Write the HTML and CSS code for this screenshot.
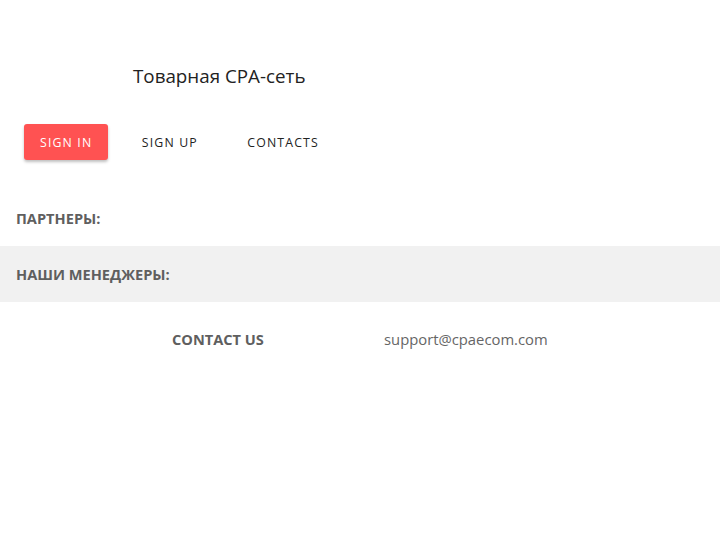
FILE: index.html
```html
<!DOCTYPE html>
<html lang="ru">
<head>
<meta charset="utf-8">
<title>Товарная CPA-сеть</title>
<link rel="stylesheet" href="styles.css">
</head>
<body>
<header class="header">
  <div class="brand">Товарная CPA-сеть</div>
  <nav class="nav">
    <a class="btn btn-primary" href="#">Sign in</a>
    <a class="btn" href="#">Sign up</a>
    <a class="btn" href="#">Contacts</a>
  </nav>
</header>
<section class="row">
  <h2 class="row-title">ПАРТНЕРЫ:</h2>
</section>
<section class="row row-grey">
  <h2 class="row-title">НАШИ МЕНЕДЖЕРЫ:</h2>
</section>
<footer class="contact">
  <div class="contact-label">CONTACT US</div>
  <div class="contact-mail">support@cpaecom.com</div>
</footer>
</body>
</html>
```
FILE: styles.css
```css
* { box-sizing: border-box; }
html, body {
  margin: 0;
  padding: 0;
  background: #fff;
  font-family: "Open Sans", "Noto Sans", sans-serif;
  color: #333;
}
.header {
  padding-top: 62px;
}
.brand {
  padding-left: 133px;
  font-size: 18.8px;
  line-height: 28px;
  color: #222;
}
.nav {
  display: flex;
  gap: 17.5px;
  padding: 34px 0 0 24px;
}
.btn {
  display: inline-flex;
  align-items: center;
  justify-content: center;
  height: 36px;
  padding: 0 16px;
  border-radius: 3px;
  font-size: 12.3px;
  letter-spacing: 1.15px;
  text-transform: uppercase;
  color: #222;
  text-decoration: none;
}
.btn-primary {
  background: #ff5252;
  color: #fff;
  box-shadow: 0 2px 3px rgba(0,0,0,0.25);
}
.row {
  height: 56px;
  display: flex;
  align-items: center;
  padding-left: 16px;
  margin-top: 30px;
}
.row-grey {
  background: #f1f1f1;
  margin-top: 0;
}
.row-title {
  margin: 0;
  font-size: 14.6px;
  font-weight: 700;
  color: #5f5f5f;
}
.contact {
  display: flex;
  align-items: center;
  height: 74px;
  padding-left: 172px;
}
.contact-label {
  width: 212px;
  font-size: 14.6px;
  font-weight: 700;
  color: #5f5f5f;
}
.contact-mail {
  font-size: 14.8px;
  color: #666;
}
```
